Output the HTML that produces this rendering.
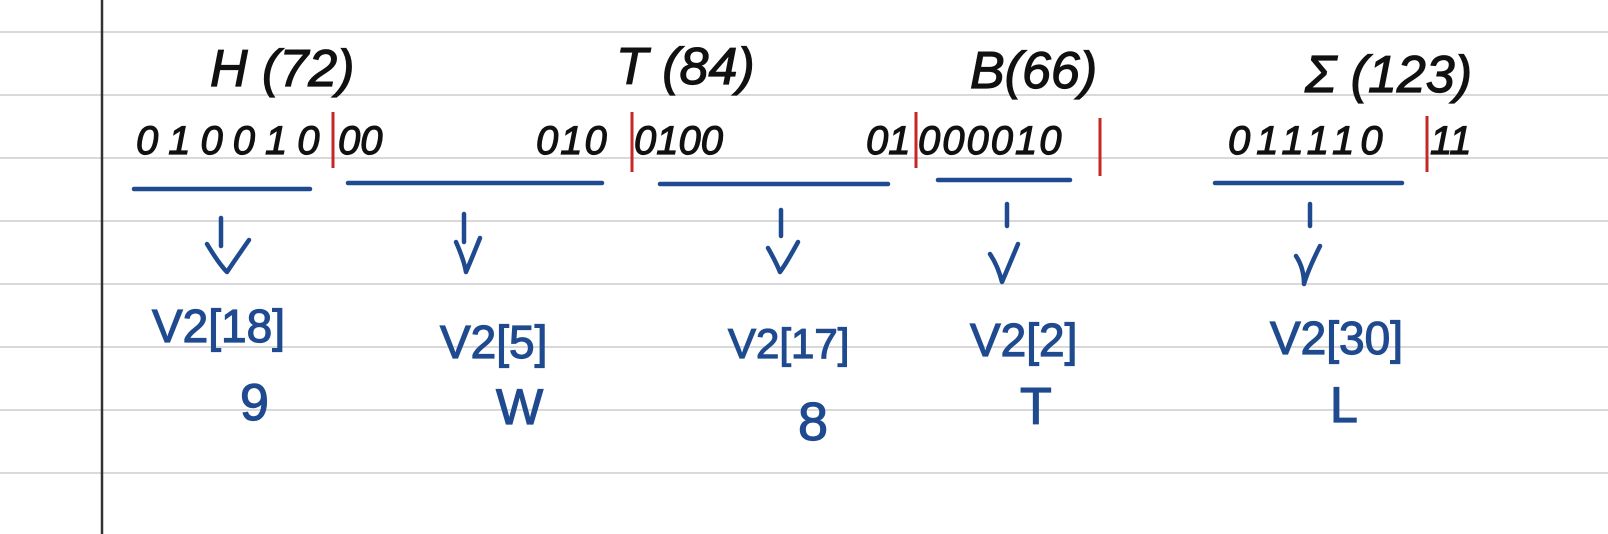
<!DOCTYPE html>
<html><head><meta charset="utf-8"><style>
html,body{margin:0;padding:0;background:#fff;width:1608px;height:534px;overflow:hidden}
svg{display:block}
.k{font-family:"Liberation Sans",sans-serif;fill:#111;stroke:#111;stroke-width:1.2}
.b{font-family:"Liberation Sans",sans-serif;fill:#1f4a8f;stroke:#1f4a8f;stroke-width:1.2}
</style></head><body>
<svg width="1608" height="534" viewBox="0 0 1608 534">
<g stroke="#d9d9d9" stroke-width="2">
<line x1="0" y1="32" x2="1608" y2="32"/><line x1="0" y1="95" x2="1608" y2="95"/>
<line x1="0" y1="158" x2="1608" y2="158"/><line x1="0" y1="221" x2="1608" y2="221"/>
<line x1="0" y1="284" x2="1608" y2="284"/><line x1="0" y1="347" x2="1608" y2="347"/>
<line x1="0" y1="410" x2="1608" y2="410"/><line x1="0" y1="473" x2="1608" y2="473"/>
</g>
<line x1="102" y1="0" x2="102" y2="534" stroke="#333" stroke-width="2.5"/>
<g class="k" font-size="52" font-style="italic">
<text x="210" y="86">H (72)</text>
<text x="616" y="84">T (84)</text>
<text x="970" y="88">B(66)</text>
<text x="1305" y="92">Σ (123)</text>
</g>
<g class="k" font-size="40" font-style="italic">
<text x="136" y="154" letter-spacing="10">010010</text><text x="338" y="154">00</text>
<text x="536" y="154" letter-spacing="2">010</text><text x="634" y="154">0100</text>
<text x="866" y="154">01</text><text x="918" y="154" letter-spacing="2">000010</text>
<text x="1228" y="154" letter-spacing="6">011110</text><text x="1430" y="154">11</text>
</g>
<g stroke="#c62828" stroke-width="3">
<line x1="333" y1="112" x2="333" y2="168"/><line x1="632" y1="112" x2="632" y2="172"/>
<line x1="916" y1="112" x2="916" y2="168"/><line x1="1100" y1="118" x2="1100" y2="176"/>
<line x1="1427" y1="116" x2="1427" y2="172"/>
</g>
<g stroke="#1f4a8f" stroke-width="4.5" stroke-linecap="round" stroke-linejoin="round" fill="none">
<line x1="134" y1="189" x2="310" y2="189"/><line x1="348" y1="183" x2="602" y2="183"/>
<line x1="660" y1="184" x2="888" y2="184"/><line x1="938" y1="180" x2="1070" y2="180"/>
<line x1="1215" y1="183" x2="1402" y2="183"/>
<path d="M221 218 v28 M207 244 q12 20 20 28 q8-12 22-32"/>
<path d="M464 214 v28 M456 242 q8 18 10 30 q6-14 14-34"/>
<path d="M781 210 v26 M768 248 q8 14 12 24 q6-8 18-30"/>
<path d="M1007 204 v22 M990 254 q8 12 12 28 q6-14 16-38"/>
<path d="M1310 204 v22 M1296 256 q8 12 8 28 q4-14 16-38"/>
</g>
<g class="b" font-size="46">
<text x="152" y="342">V2[18]</text>
<text x="240" y="420" font-size="52">9</text>
<text x="440" y="358">V2[5]</text>
<text x="496" y="424" font-size="50">W</text>
<text x="728" y="358" font-size="42">V2[17]</text>
<text x="798" y="440" font-size="54">8</text>
<text x="970" y="356">V2[2]</text>
<text x="1020" y="424" font-size="52">T</text>
<text x="1270" y="354">V2[30]</text>
<text x="1330" y="422" font-size="50">L</text>
</g>
</svg>
</body></html>
